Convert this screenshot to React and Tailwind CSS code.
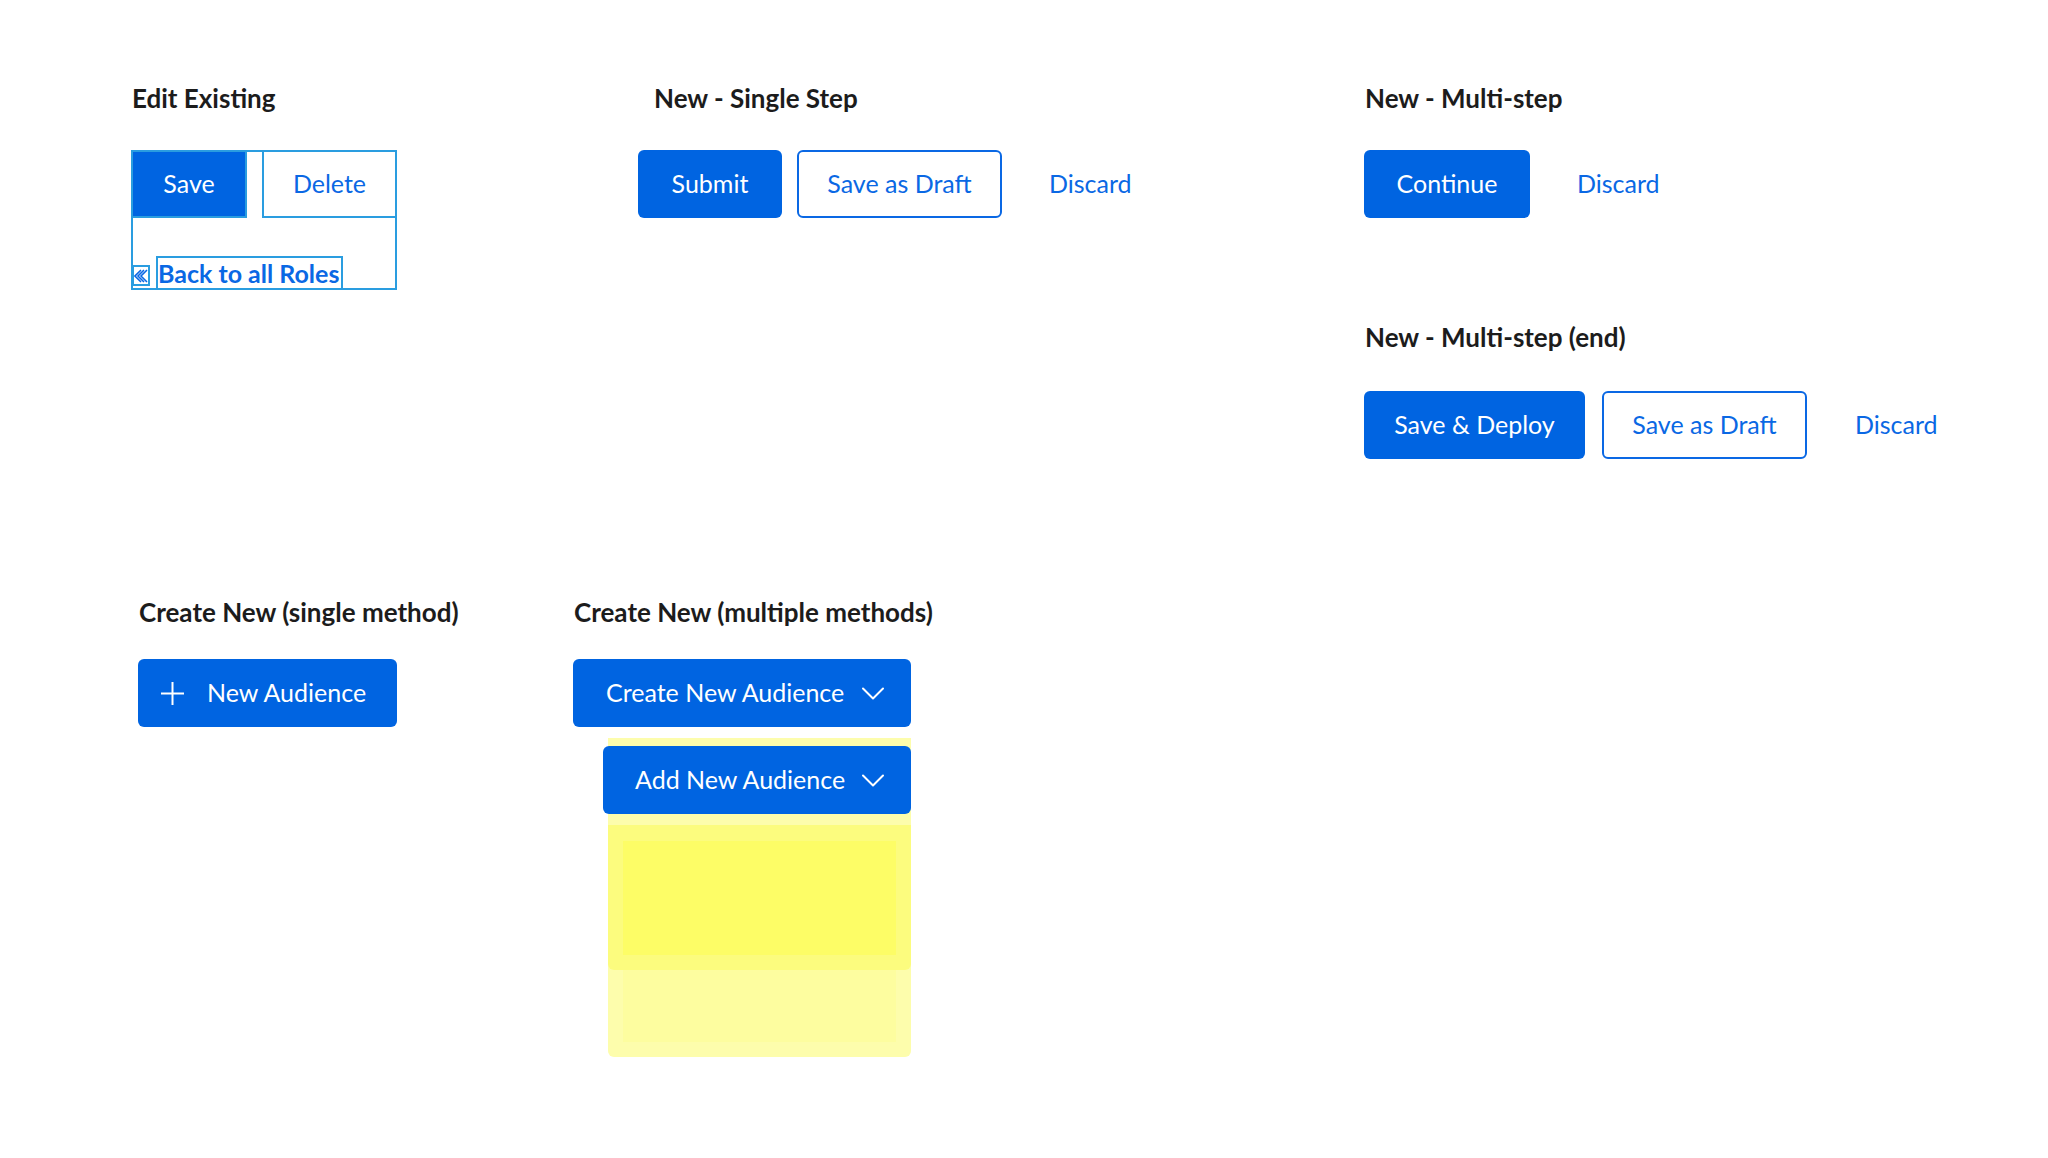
import React from "react";

const font = { fontFamily: "Lato, 'Open Sans', sans-serif" };

const Heading = ({ children, className = "" }) => (
  <h2 className={`text-[26px] leading-[32px] font-bold text-[#1c1c1c] whitespace-nowrap ${className}`}>{children}</h2>
);

const Primary = ({ children, className = "" }) => (
  <button className={`h-[68px] rounded-md bg-[#0064e1] text-white text-[25px] flex items-center justify-center whitespace-nowrap ${className}`}>
    {children}
  </button>
);

const Secondary = ({ children, className = "" }) => (
  <button className={`h-[68px] rounded-md border-2 border-[#0a68e4] bg-white text-[#0a68e4] text-[25px] flex items-center justify-center whitespace-nowrap ${className}`}>
    {children}
  </button>
);

const Link = ({ children }) => (
  <span className="text-[25px] text-[#0a68e4] whitespace-nowrap">{children}</span>
);

const Chevron = () => (
  <svg width="22" height="13" viewBox="0 0 22 13" fill="none" stroke="currentColor" strokeWidth="2" strokeLinecap="round" strokeLinejoin="round">
    <polyline points="1,1.5 11,11.5 21,1.5" />
  </svg>
);

export default function App() {
  return (
    <div className="w-[2048px] h-[1158px] bg-white pt-[82px]" style={font}>
      {/* top row */}
      <div className="flex items-start pl-[131px]">
        {/* Edit existing */}
        <div className="w-[507px]">
          <Heading className="ml-[1px]">Edit Existing</Heading>
          <div className="mt-[36px] w-[266px] h-[140px] outline-2 -outline-offset-2 outline-[#2a9de0]">
            <div className="flex gap-[15px]">
              <button className="w-[116px] h-[68px] bg-[#0064e1] text-white text-[25px] outline-2 -outline-offset-2 outline-[#2a9de0]">
                Save
              </button>
              <button className="w-[135px] h-[68px] bg-white text-[#0a68e4] text-[25px] border-2 border-[#2a9de0]">
                Delete
              </button>
            </div>
            <div className="mt-[38px] flex items-end">
              <div className="ml-[1px] mb-[4px] w-[18px] h-[21px] border-2 border-[#2a9de0] flex items-center justify-center text-[#0a68e4]">
                <svg width="14" height="14" viewBox="0 0 14 14" fill="none" stroke="currentColor" strokeWidth="1.6" strokeLinejoin="miter">
                  <polyline points="7,1 1,7 7,13" />
                  <polyline points="13,1 7,7 13,13" />
                  <polyline points="10,1 4,7 10,13" />
                </svg>
              </div>
              <div className="ml-[6px] w-[187px] h-[34px] border-2 border-[#2a9de0] flex items-center">
                <span className="text-[25px] leading-none font-bold text-[#0a68e4] whitespace-nowrap">Back to all Roles</span>
              </div>
            </div>
          </div>
        </div>

        {/* New - single step */}
        <div className="w-[726px]">
          <Heading className="ml-[16px]">New - Single Step</Heading>
          <div className="mt-[36px] flex items-center">
            <Primary className="w-[144px]">Submit</Primary>
            <Secondary className="w-[205px] ml-[15px]">Save as Draft</Secondary>
            <div className="ml-[47px]">
              <Link>Discard</Link>
            </div>
          </div>
        </div>

        {/* New - multi step */}
        <div>
          <Heading className="ml-[1px]">New - Multi-step</Heading>
          <div className="mt-[36px] flex items-center">
            <Primary className="w-[166px]">Continue</Primary>
            <div className="ml-[47px]">
              <Link>Discard</Link>
            </div>
          </div>
          <Heading className="ml-[1px] mt-[103px]">New - Multi-step (end)</Heading>
          <div className="mt-[38px] flex items-center">
            <Primary className="w-[221px]">Save &amp; Deploy</Primary>
            <Secondary className="w-[205px] ml-[17px]">Save as Draft</Secondary>
            <div className="ml-[48px]">
              <Link>Discard</Link>
            </div>
          </div>
        </div>
      </div>

      {/* bottom row */}
      <div className="flex items-start pl-[138px] mt-[137px]">
        <div className="w-[435px]">
          <Heading className="ml-[1px]">Create New (single method)</Heading>
          <div className="mt-[31px]">
            <Primary className="w-[259px] !justify-start pl-[23px]">
              <svg width="23" height="23" viewBox="0 0 23 23" stroke="currentColor" strokeWidth="2" fill="none">
                <line x1="11.5" y1="0" x2="11.5" y2="23" />
                <line x1="0" y1="11.5" x2="23" y2="11.5" />
              </svg>
              <span className="ml-[23px]">New Audience</span>
            </Primary>
          </div>
        </div>

        <div>
          <Heading className="ml-[1px]">Create New (multiple methods)</Heading>
          <div className="mt-[31px]">
            <Primary className="w-[338px] !justify-between pl-[33px] pr-[27px]">
              <span>Create New Audience</span>
              <Chevron />
            </Primary>
            {/* dropdown highlight */}
            <div className="ml-[35px] mt-[11px] w-[303px] bg-[#fdfdac] rounded-b-md pb-[15px]">
              <div className="pt-[8px] -ml-[5px]">
                <Primary className="w-[308px] !justify-between pl-[32px] pr-[27px]">
                  <span>Add New Audience</span>
                  <Chevron />
                </Primary>
              </div>
              <div className="mt-[11px] h-[145px] bg-[#fcfc7e] rounded-b-md px-[15px] pt-[16px]">
                <div className="h-[114px] bg-[#fdfd66]" />
              </div>
              <div className="mx-[15px] h-[72px] bg-[#fdfd9f]" />
            </div>
          </div>
        </div>
      </div>
    </div>
  );
}
